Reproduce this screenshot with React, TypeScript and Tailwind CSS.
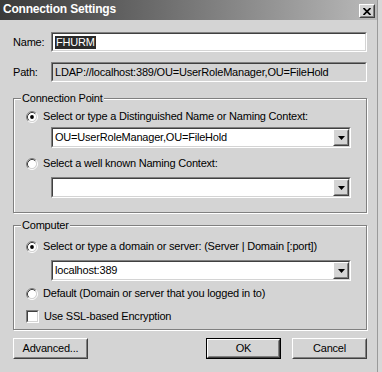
import React from "react";

// Win2000-style grayscale dialog
const face = "bg-[#d4d4d4]";

function Sunken({
  className = "",
  inner = "",
  children,
}: {
  className?: string;
  inner?: string;
  children?: React.ReactNode;
}) {
  return (
    <div
      className={`border border-t-[#808080] border-l-[#808080] border-r-white border-b-white ${className}`}
    >
      <div
        className={`h-full border border-t-[#404040] border-l-[#404040] border-r-[#d4d4d4] border-b-[#d4d4d4] ${inner}`}
      >
        {children}
      </div>
    </div>
  );
}

function Raised({
  className = "",
  inner = "",
  children,
}: {
  className?: string;
  inner?: string;
  children?: React.ReactNode;
}) {
  return (
    <div
      className={`${face} border border-t-white border-l-white border-r-[#404040] border-b-[#404040] ${className}`}
    >
      <div
        className={`h-full border border-t-[#d4d4d4] border-l-[#d4d4d4] border-r-[#808080] border-b-[#808080] ${inner}`}
      >
        {children}
      </div>
    </div>
  );
}

function Radio({ checked = false }: { checked?: boolean }) {
  return (
    <svg width="12" height="12" viewBox="0 0 12 12" className="shrink-0">
      <circle cx="6" cy="6" r="4.2" fill="#fff" />
      <path d="M2.11 9.89 A5.5 5.5 0 0 1 9.89 2.11" fill="none" stroke="#808080" />
      <path d="M9.89 2.11 A5.5 5.5 0 0 1 2.11 9.89" fill="none" stroke="#fff" />
      <path d="M2.82 9.18 A4.5 4.5 0 0 1 9.18 2.82" fill="none" stroke="#404040" />
      <path d="M9.18 2.82 A4.5 4.5 0 0 1 2.82 9.18" fill="none" stroke="#d4d4d4" />
      {checked && <circle cx="6" cy="6" r="1.9" fill="#000" />}
    </svg>
  );
}

function Combo({ value = "" }: { value?: string }) {
  return (
    <Sunken className="ml-[37px] h-[21px] w-[300px]" inner="flex bg-white">
      <div className="flex flex-1 items-center pl-[2px]">{value}</div>
      <Raised className="h-full w-[16px]" inner="flex items-center justify-center">
        <svg width="7" height="4" viewBox="0 0 7 4">
          <polygon points="0,0 7,0 3.5,4" fill="#000" />
        </svg>
      </Raised>
    </Sunken>
  );
}

function Option({ checked, label }: { checked?: boolean; label: string }) {
  return (
    <div className="flex h-[13px] items-center gap-[5px] pl-[12px]">
      <Radio checked={checked} />
      <span className="whitespace-nowrap">{label}</span>
    </div>
  );
}

function Group({
  title,
  className = "",
  children,
}: {
  title: string;
  className?: string;
  children: React.ReactNode;
}) {
  return (
    <div
      className={`relative w-[354px] border border-[#808080] shadow-[inset_1px_1px_0_#fff,1px_1px_0_#fff] ${className}`}
    >
      <span className={`absolute -top-[7px] left-[7px] ${face} px-[1px] leading-[13px]`}>
        {title}
      </span>
      {children}
    </div>
  );
}

function Button({
  label,
  isDefault = false,
}: {
  label: string;
  isDefault?: boolean;
}) {
  if (isDefault) {
    return (
      <div className="h-[21px] w-[75px] border border-black">
        <Raised className="h-full w-full" inner="flex items-center justify-center">
          {label}
        </Raised>
      </div>
    );
  }
  return (
    <Raised className="h-[21px] w-[75px]" inner="flex items-center justify-center">
      {label}
    </Raised>
  );
}

export default function App() {
  return (
    <div
      className={`flex h-[372px] w-[382px] ${face} font-['Liberation_Sans',Arial,sans-serif] text-[11px] leading-[13px] tracking-[-0.2px] text-black`}
    >
      <div className="flex w-[377px] flex-col">
        {/* title bar */}
        <div className="flex h-[20px] items-start justify-between bg-gradient-to-r from-[#3a3a3a] to-[#bababa]">
          <span className="pl-[3px] pt-[3px] text-[12px] font-bold text-white">
            Connection Settings
          </span>
          <Raised className="mr-[2px] mt-[4px] h-[14px] w-[16px]" inner="flex items-center justify-center">
            <svg width="8" height="7" viewBox="0 0 8 7">
              <path d="M0.5 0 L7.5 7 M7.5 0 L0.5 7" stroke="#000" strokeWidth="1.7" />
            </svg>
          </Raised>
        </div>

        <div className="flex flex-col pl-[13px]">
          <div className="mt-[12px] flex h-[20px] items-center">
            <span className="w-[38px]">Name:</span>
            <Sunken className="h-[20px] w-[316px]" inner="flex items-center bg-white pl-[2px]">
              <span className="bg-[#2a2a2a] px-[1px] text-white">FHURM</span>
            </Sunken>
          </div>

          <div className="mt-[10px] flex h-[20px] items-center">
            <span className="w-[38px]">Path:</span>
            <Sunken className="h-[20px] w-[316px]" inner={`flex items-center ${face} pl-[2px]`}>
              <span className="whitespace-nowrap">
                LDAP://localhost:389/OU=UserRoleManager,OU=FileHold
              </span>
            </Sunken>
          </div>

          <Group title="Connection Point" className="mt-[16px] pb-[14px] pt-[11px]">
            <Option checked label="Select or type a Distinguished Name or Naming Context:" />
            <div className="mt-[4px]">
              <Combo value="OU=UserRoleManager,OU=FileHold" />
            </div>
            <div className="mt-[9px]">
              <Option label="Select a well known Naming Context:" />
            </div>
            <div className="mt-[7px]">
              <Combo />
            </div>
          </Group>

          <Group title="Computer" className="mt-[12px] pb-[6px] pt-[14px]">
            <Option checked label="Select or type a domain or server: (Server | Domain [:port])" />
            <div className="mt-[7px]">
              <Combo value="localhost:389" />
            </div>
            <div className="mt-[6px]">
              <Option label="Default (Domain or server that you logged in to)" />
            </div>
            <div className="mt-[10px] flex h-[13px] items-center gap-[5px] pl-[12px]">
              <Sunken className="h-[13px] w-[13px] shrink-0" inner="bg-white" />
              <span>Use SSL-based Encryption</span>
            </div>
          </Group>

          <div className="mt-[8px] flex w-[354px] items-center">
            <Button label="Advanced..." />
            <div className="flex-1" />
            <Button label="OK" isDefault />
            <div className="w-[11px]" />
            <Button label="Cancel" />
          </div>
        </div>
      </div>
      <div className="w-px bg-[#9a9a9a]" />
      <div className="flex-1 bg-[#d8d8d8]" />
    </div>
  );
}
